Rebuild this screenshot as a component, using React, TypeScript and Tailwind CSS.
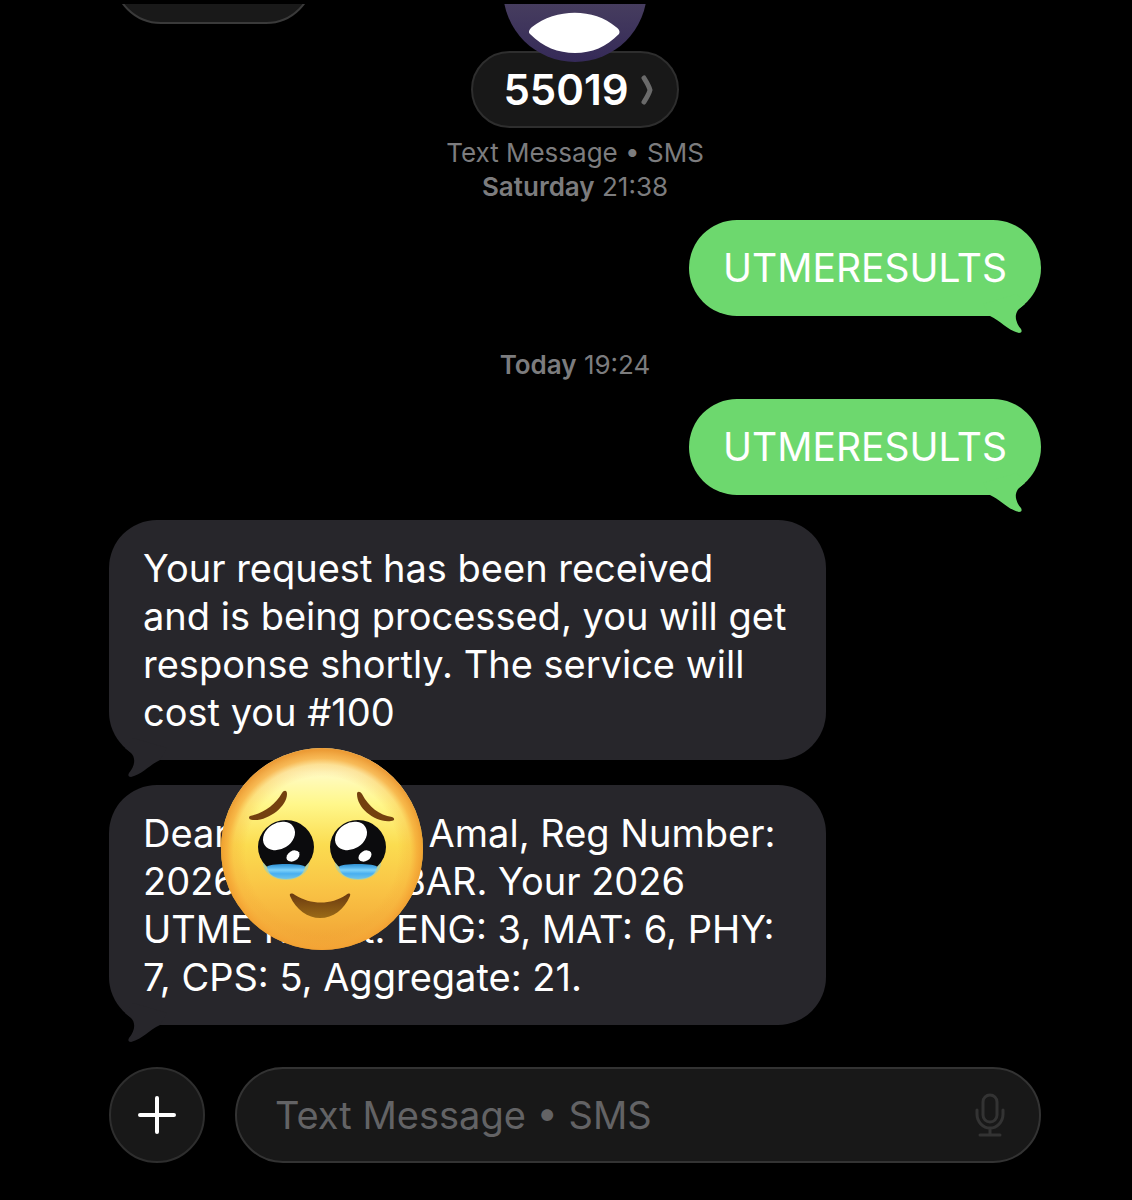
import type { ReactNode } from "react"
import clsx from "clsx"

function Avatar() {
  return (
    <svg viewBox="0 0 146 59" className="relative z-10 -mb-3 h-[59px] w-[146px]" aria-hidden="true">
      <defs>
        <linearGradient id="avatar" x1="0" y1="0" x2="0" y2="1">
          <stop offset="0.5" stopColor="#4a4160" />
          <stop offset="1" stopColor="#352a58" />
        </linearGradient>
      </defs>
      <circle cx="73" cy="-14" r="72" fill="url(#avatar)" />
      <path
        d="M28 30 C26 28 27 26 30 23 C54 4 92 4 114 23 C118 26 118 28 117 30 C104 43 90 49 73 49 C56 49 41 43 28 30 Z"
        fill="#fff"
      />
    </svg>
  )
}

function PleadingFace() {
  return (
    <svg
      viewBox="0 0 202 204"
      className="absolute -top-[38px] left-28 h-[204px] w-[202px]"
      role="img"
      aria-label="Face holding back tears"
    >
      <defs>
        <linearGradient id="face" x1="0.5" y1="0" x2="0.5" y2="1">
          <stop offset="0" stopColor="#fff3b0" />
          <stop offset="0.12" stopColor="#fffbc4" />
          <stop offset="0.28" stopColor="#fff78a" />
          <stop offset="0.48" stopColor="#fbdc50" />
          <stop offset="0.72" stopColor="#f9c144" />
          <stop offset="1" stopColor="#f0a033" />
        </linearGradient>
        <radialGradient id="rim" cx="0.5" cy="0.52" r="0.51">
          <stop offset="0.74" stopColor="#f3a034" stopOpacity="0" />
          <stop offset="0.86" stopColor="#f6ab3a" stopOpacity="0.3" />
          <stop offset="0.92" stopColor="#f5a535" stopOpacity="0.75" />
          <stop offset="1" stopColor="#ea9228" stopOpacity="0.9" />
        </radialGradient>
        <linearGradient id="tear" x1="0" y1="0" x2="0" y2="1">
          <stop offset="0" stopColor="#2f8fd0" />
          <stop offset="0.25" stopColor="#55b4ee" />
          <stop offset="0.4" stopColor="#7dd2fa" />
          <stop offset="0.65" stopColor="#48aff0" />
          <stop offset="1" stopColor="#6fc4ea" />
        </linearGradient>
        <linearGradient id="mouth" x1="0" y1="0" x2="0" y2="1">
          <stop offset="0" stopColor="#6b3a10" />
          <stop offset="1" stopColor="#9a6a16" />
        </linearGradient>
      </defs>
      <ellipse cx="101" cy="102" rx="101" ry="101" fill="url(#face)" />
      <ellipse cx="101" cy="102" rx="101" ry="101" fill="url(#rim)" />
      <path
        d="M29 69 C43 66 54 58 61 46 C63 43 66 43 66 47 C66 59 48 74 32 73 C28 73 27 70 29 69 Z"
        fill="#74400f"
      />
      <path
        d="M136 47 C136 44 139 44 141 47 C148 60 158 68 171 70 C174 71 174 74 170 74 C154 76 136 61 136 47 Z"
        fill="#74400f"
      />
      <Eye x={65} />
      <Eye x={137} />
      <path
        d="M69 149 C68 146 71 146 74 148 C90 158 110 158 125 148 C128 146 130 146 129 149 C123 163 112 171 99 171 C87 171 75 163 69 149 Z"
        fill="url(#mouth)"
      />
    </svg>
  )
}

function Eye({ x }: { x: number }) {
  return (
    <g transform={`translate(${x} 100)`}>
      <ellipse cy="16" rx="23" ry="17" fill="#b9cf98" />
      <ellipse rx="28" ry="27" fill="#0b0b0d" />
      <path d="M-19 20 C-19 18 -10 17 0 17 C10 17 19 18 19 20 C18 28 10 32 0 32 C-10 32 -18 28 -19 20 Z" fill="url(#tear)" />
      <ellipse cx="-7" cy="-11" rx="17" ry="13" transform="rotate(-32 -7 -11)" fill="#fff" />
      <ellipse cx="7" cy="9" rx="7" ry="5" transform="rotate(-32 7 9)" fill="#fff" />
    </g>
  )
}

function Bubble({ sent, children }: { sent?: boolean; children: ReactNode }) {
  return (
    <div
      className={clsx(
        "relative rounded-[48px] px-[34px] py-6 leading-[48px] text-white",
        sent ? "self-end bg-[#6dd86e] text-[39px]" : "w-[717px] max-w-full self-start bg-[#27262b] text-[38px]"
      )}
    >
      <svg
        viewBox="0 0 60 50"
        className={clsx(
          "absolute -bottom-[18px] h-[50px] w-[60px]",
          sent ? "right-0 fill-[#6dd86e]" : "left-0 -scale-x-100 fill-[#27262b]"
        )}
        aria-hidden="true"
      >
        <path d="M9 32 C20 37 26 46 38 49 Q42 49 40 45 C34 38 33 30 38 25 L44 20 L36 10 L2 20 Z" />
      </svg>
      {children}
    </div>
  )
}

export default function App() {
  return (
    <main className="flex min-h-screen flex-col bg-black pt-1 pr-[91px] pb-9 pl-[109px] font-['Inter',sans-serif]">
      <header className="grid grid-cols-[1fr_auto_1fr]">
        <div className="flex h-5 items-end overflow-hidden pl-1">
          <button
            type="button"
            aria-label="Back"
            className="h-24 w-[201px] shrink-0 rounded-full border-2 border-[#3a3a3a] bg-[#191919]"
          />
        </div>
        <div className="flex flex-col items-center">
          <Avatar />
          <button
            type="button"
            className="flex h-[77px] items-center gap-3 rounded-full border-2 border-[#2e2e2e] bg-[#181818] pr-6 pl-[30px] text-[42px] font-semibold text-white"
          >
            55019
            <svg viewBox="0 0 12 30" className="h-[30px] w-3" fill="none" aria-hidden="true">
              <path
                d="M3 3 Q8 11 9 15 Q8 19 3 27"
                stroke="#6a6a6a"
                strokeWidth="5"
                strokeLinecap="round"
                strokeLinejoin="round"
              />
            </svg>
          </button>
        </div>
      </header>

      <p className="mt-2 text-center text-[26px] leading-[34px] text-[#7c7c7e]">
        Text Message • SMS
        <br />
        <span className="font-semibold">Saturday</span> 21:38
      </p>

      <section className="mt-4 flex flex-col">
        <Bubble sent>UTMERESULTS</Bubble>
        <p className="mt-8 mb-[17px] text-center text-[26px] leading-[34px] text-[#7c7c7e]">
          <span className="font-semibold">Today</span> 19:24
        </p>
        <Bubble sent>UTMERESULTS</Bubble>
        <div className="mt-[25px] flex flex-col gap-[25px]">
          <Bubble>
            Your request has been received
            <br />
            and is being processed, you will get
            <br />
            response shortly. The service will
            <br />
            cost you #100
          </Bubble>
          <Bubble>
            Dear
            <span className="inline-block w-[200px]" />
            Amal, Reg Number:
            <br />
            2026
            <span className="inline-block w-[164px]" />
            BAR. Your 2026
            <br />
            UTME Result: ENG: 3, MAT: 6, PHY:
            <br />
            7, CPS: 5, Aggregate: 21.
            <PleadingFace />
          </Bubble>
        </div>
      </section>

      <form className="mt-[42px] flex items-center gap-[30px]">
        <button
          type="button"
          aria-label="Add attachment"
          className="flex size-24 shrink-0 items-center justify-center rounded-full border-2 border-[#2e2e2e] bg-[#181818]"
        >
          <svg viewBox="0 0 38 38" className="size-[38px]" aria-hidden="true">
            <path d="M19 2V36M2 19H36" stroke="#fff" strokeWidth="4" strokeLinecap="round" />
          </svg>
        </button>
        <div className="flex h-24 min-w-0 flex-1 items-center rounded-full border-2 border-[#333333] bg-[#181818] pr-[34px] pl-[38px]">
          <input
            type="text"
            aria-label="Message"
            placeholder="Text Message • SMS"
            className="min-w-0 flex-1 bg-transparent text-[38px] text-white outline-none placeholder:text-[#636365]"
          />
          <button type="button" aria-label="Dictate">
            <svg viewBox="0 0 30 44" className="h-11 w-[30px]" fill="none" aria-hidden="true">
              <g stroke="#333333" strokeWidth="3" strokeLinecap="round">
                <rect x="8" y="2" width="14" height="27" rx="7" />
                <path d="M2 17V21A13 14 0 0 0 28 21V17M15 35V42M5 42H25" />
              </g>
            </svg>
          </button>
        </div>
      </form>
    </main>
  )
}
